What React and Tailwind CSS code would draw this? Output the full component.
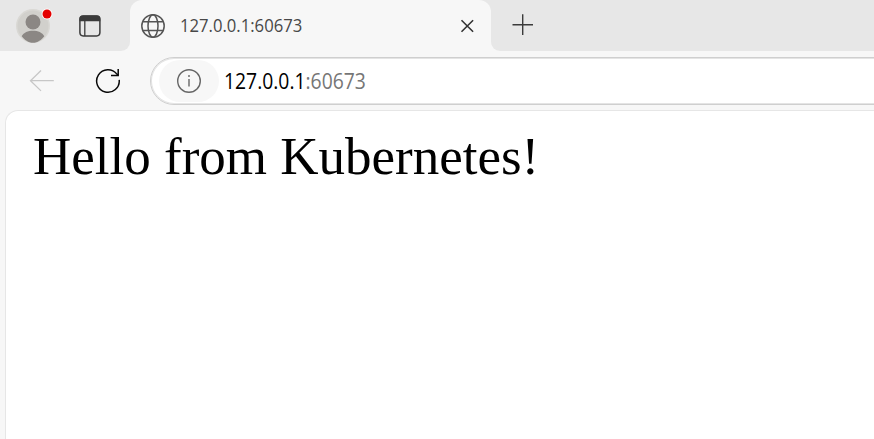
function Avatar() {
  return (
    <svg className="block shrink-0" width="40" height="40" viewBox="0 0 40 40">
      <circle cx="20" cy="20" r="17" fill="#d9d8d4" />
      <circle cx="20" cy="20" r="15.5" fill="#d1d0cc" />
      <circle cx="20" cy="16" r="7.5" fill="#8b8784" />
      <path d="M8.7 30.2C10.6 26.5 15 24.7 20 24.7s9.4 1.8 11.3 5.5C28.6 33.7 24.6 36.8 20 36.8s-8.600-3.100-11.300-6.600Z" fill="#8b8784" />
      <circle cx="34" cy="8" r="5.400" fill="#fff" />
      <circle cx="34" cy="8" r="4.500" fill="#e40000" />
    </svg>
  );
}

function WorkspaceIcon() {
  return (
    <svg className="block shrink-0" width="22" height="22" viewBox="0 0 22 22" fill="none" stroke="#3b3b3b">
      <rect x="0.900" y="0.900" width="20" height="20" rx="3.300" strokeWidth="1.500" />
      <path d="M0.500 6.200V4Q0.500 0.500 4 0.500H18Q21.300 0.500 21.300 4V6.200Z" fill="#3b3b3b" stroke="none" />
      <path d="M5.800 6v15" strokeWidth="1.300" />
    </svg>
  );
}

function GlobeIcon() {
  return (
    <svg className="block shrink-0" width="24" height="24" viewBox="0 0 24 24" fill="none" stroke="#555" strokeWidth="1.500">
      <circle cx="12" cy="12" r="11.200" />
      <ellipse cx="12" cy="12" rx="5" ry="11.200" />
      <path d="M2 7.700h20M2 16.400h20" />
    </svg>
  );
}

function BackIcon() {
  return (
    <svg className="block shrink-0" width="26" height="22" viewBox="0 0 26 22" fill="none" stroke="#c7c7c7" strokeWidth="1.300">
      <path d="M24.800 10.700H1.500M12 0.500L1.500 10.700 12 20.900" />
    </svg>
  );
}

function ReloadIcon() {
  return (
    <svg className="block shrink-0" width="26" height="26" viewBox="0 0 26 26" fill="none" stroke="#080808" strokeWidth="1.500">
      <path d="M24.200 11.900A11.300 11.300 0 1 1 21.900 6.100L23.200 7.500" />
      <path d="M23.200 0.900V7.600H16" />
    </svg>
  );
}

function InfoIcon() {
  return (
    <svg className="block shrink-0" width="24" height="24" viewBox="0 0 24 24" fill="none" stroke="#666">
      <circle cx="12" cy="12" r="11.300" strokeWidth="1.400" />
      <path d="M12 10v7.500" strokeWidth="1.400" />
      <circle cx="12" cy="7" r="0.950" fill="#666" stroke="none" />
    </svg>
  );
}

function TabStrip() {
  return (
    <div className="flex h-[51px] shrink-0 bg-[#f7f7f7]">
      <div className="flex w-[130px] shrink-0 items-center rounded-br-[9px] bg-[#e7e7e7] pl-[13px]">
        <Avatar />
        <div className="pl-[26px]">
          <WorkspaceIcon />
        </div>
      </div>
      <div className="w-[361px] shrink-0 bg-linear-to-b from-[#e7e7e7] from-50% to-[#f7f7f7] to-50%">
        <div className="flex h-full items-center rounded-t-[12px] bg-[#f7f7f7] pl-[11px] pr-[16px]">
          <GlobeIcon />
          <span className="mb-[2px] ml-[15px] w-[130px] origin-left scale-x-[0.925] whitespace-nowrap text-[18px] leading-6 text-[#484848]">
            127.0.0.1:60673
          </span>
          <svg className="ml-auto block" width="15" height="15" viewBox="0 0 15 15" stroke="#333" strokeWidth="1.600">
            <path d="M1.500 2.200l11.600 11.600M13.100 2.200l-11.600 11.600" />
          </svg>
        </div>
      </div>
      <div className="flex-1 rounded-bl-[9px] bg-[#e7e7e7] pl-[21px] pt-[14px]">
        <svg className="block" width="22" height="22" viewBox="0 0 22 22" stroke="#3b3b3b" strokeWidth="1.400">
          <path d="M0.500 10.700h20.500M10.700 0.300v20.600" />
        </svg>
      </div>
    </div>
  );
}

function Toolbar() {
  return (
    <div className="flex h-[59px] shrink-0 items-center overflow-hidden bg-[#f7f7f7] pl-[29px]">
      <BackIcon />
      <div className="pl-[40px]">
        <ReloadIcon />
      </div>
      <div className="-mr-1 ml-[29px] flex h-[48px] flex-1 items-center rounded-l-full border border-[#cfcfcf] bg-white pl-[8px] shadow-[inset_0_0_0_1px_#e4e4e4]">
        <div className="flex h-[42px] w-[60px] shrink-0 items-center justify-center rounded-full bg-[#f7f7f7]">
          <InfoIcon />
        </div>
        <span className="ml-[5px] origin-left scale-x-[0.92] whitespace-nowrap text-[21px] leading-7 text-[#767676]">
          <span className="text-black">127.0.0.1</span>:60673
        </span>
      </div>
    </div>
  );
}

export default function App() {
  return (
    <div className="flex h-screen w-full flex-col overflow-hidden bg-[#f7f7f7] font-['Open_Sans','Noto_Sans',sans-serif]">
      <TabStrip />
      <Toolbar />
      <main className="ml-[5px] flex-1 rounded-tl-[13px] border-l border-t border-[#e6e6e6] bg-white pl-[26px] pt-[15px]">
        <p className="whitespace-nowrap pl-px font-['Liberation_Serif',serif] text-[53px] leading-[60px] text-black">
          Hello from Kubernetes!
        </p>
      </main>
    </div>
  );
}
